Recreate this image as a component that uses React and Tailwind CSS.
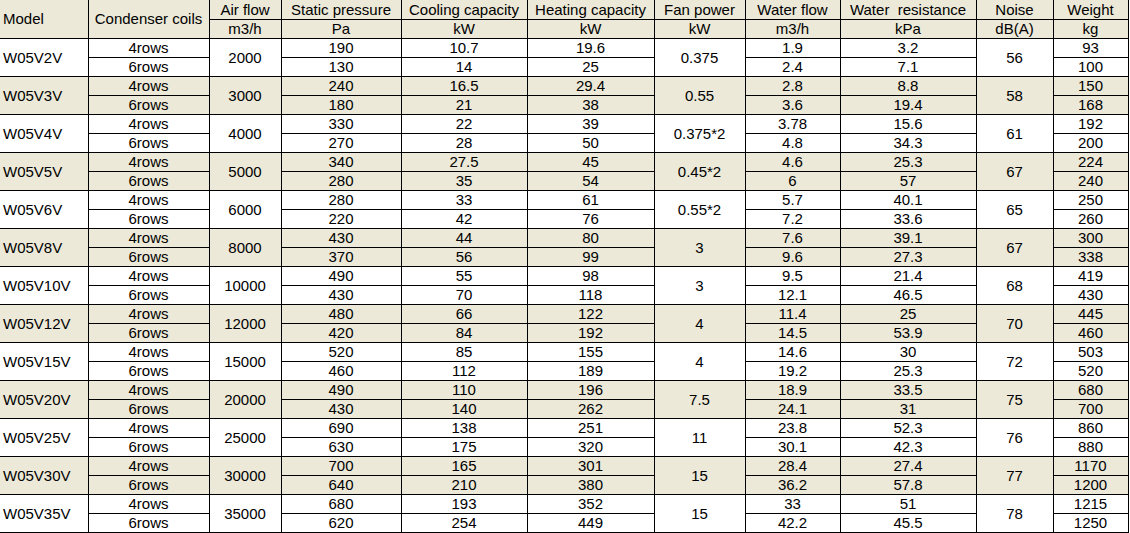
const rows = [
  ["W05V2V", "2000", ["190", "130"], ["10.7", "14"], ["19.6", "25"], "0.375", ["1.9", "2.4"], ["3.2", "7.1"], "56", ["93", "100"]],
  ["W05V3V", "3000", ["240", "180"], ["16.5", "21"], ["29.4", "38"], "0.55", ["2.8", "3.6"], ["8.8", "19.4"], "58", ["150", "168"]],
  ["W05V4V", "4000", ["330", "270"], ["22", "28"], ["39", "50"], "0.375*2", ["3.78", "4.8"], ["15.6", "34.3"], "61", ["192", "200"]],
  ["W05V5V", "5000", ["340", "280"], ["27.5", "35"], ["45", "54"], "0.45*2", ["4.6", "6"], ["25.3", "57"], "67", ["224", "240"]],
  ["W05V6V", "6000", ["280", "220"], ["33", "42"], ["61", "76"], "0.55*2", ["5.7", "7.2"], ["40.1", "33.6"], "65", ["250", "260"]],
  ["W05V8V", "8000", ["430", "370"], ["44", "56"], ["80", "99"], "3", ["7.6", "9.6"], ["39.1", "27.3"], "67", ["300", "338"]],
  ["W05V10V", "10000", ["490", "430"], ["55", "70"], ["98", "118"], "3", ["9.5", "12.1"], ["21.4", "46.5"], "68", ["419", "430"]],
  ["W05V12V", "12000", ["480", "420"], ["66", "84"], ["122", "192"], "4", ["11.4", "14.5"], ["25", "53.9"], "70", ["445", "460"]],
  ["W05V15V", "15000", ["520", "460"], ["85", "112"], ["155", "189"], "4", ["14.6", "19.2"], ["30", "25.3"], "72", ["503", "520"]],
  ["W05V20V", "20000", ["490", "430"], ["110", "140"], ["196", "262"], "7.5", ["18.9", "24.1"], ["33.5", "31"], "75", ["680", "700"]],
  ["W05V25V", "25000", ["690", "630"], ["138", "175"], ["251", "320"], "11", ["23.8", "30.1"], ["52.3", "42.3"], "76", ["860", "880"]],
  ["W05V30V", "30000", ["700", "640"], ["165", "210"], ["301", "380"], "15", ["28.4", "36.2"], ["27.4", "57.8"], "77", ["1170", "1200"]],
  ["W05V35V", "35000", ["680", "620"], ["193", "254"], ["352", "449"], "15", ["33", "42.2"], ["51", "45.5"], "78", ["1215", "1250"]],
];

const widths = [88, 121, 72, 120, 126, 127, 91, 95, 136, 77, 75];

const cell = "border-r border-b border-black p-0 text-center align-middle";

export default function App() {
  return (
    <div className="w-[1130px] h-[533px] bg-white overflow-hidden" style={{ fontFamily: '"Liberation Sans", Arial, sans-serif' }}>
      <table className="table-fixed border-collapse w-[1128px] text-[15px] leading-none text-black">
        <colgroup>
          {widths.map((w, i) => (
            <col key={i} style={{ width: w }} />
          ))}
        </colgroup>
        <thead className="bg-[#ece9d8]">
          <tr className="h-[19px]">
            <th rowSpan={2} className="border-r border-b border-black p-0 pl-[3px] text-left font-normal align-middle">Model</th>
            <th rowSpan={2} className={cell + " font-normal"}>Condenser coils</th>
            <th className={cell + " font-normal"}>Air flow</th>
            <th className={cell + " font-normal"}>Static pressure</th>
            <th className={cell + " font-normal"}>Cooling capacity</th>
            <th className={cell + " font-normal"}>Heating capacity</th>
            <th className={cell + " font-normal"}>Fan power</th>
            <th className={cell + " font-normal"}>Water flow</th>
            <th className={cell + " font-normal whitespace-pre"}>Water  resistance</th>
            <th className={cell + " font-normal"}>Noise</th>
            <th className={cell + " font-normal"}>Weight</th>
          </tr>
          <tr className="h-[19px]">
            <th className={cell + " font-normal"}>m3/h</th>
            <th className={cell + " font-normal"}>Pa</th>
            <th className={cell + " font-normal"}>kW</th>
            <th className={cell + " font-normal"}>kW</th>
            <th className={cell + " font-normal"}>kW</th>
            <th className={cell + " font-normal"}>m3/h</th>
            <th className={cell + " font-normal"}>kPa</th>
            <th className={cell + " font-normal"}>dB(A)</th>
            <th className={cell + " font-normal"}>kg</th>
          </tr>
        </thead>
        <tbody>
          {rows.map((r, i) => {
            const [model, air, sp, cool, heat, fan, wf, wr, noise, wt] = r;
            const bg = i % 2 === 1 ? "bg-[#ece9d8]" : "bg-white";
            return [0, 1].map((k) => (
              <tr key={model + k} className={"h-[19px] " + bg}>
                {k === 0 && (
                  <td rowSpan={2} className="border-r border-b border-black p-0 pl-[3px] text-left align-middle">{model}</td>
                )}
                <td className={cell}>{k === 0 ? "4rows" : "6rows"}</td>
                {k === 0 && <td rowSpan={2} className={cell}>{air}</td>}
                <td className={cell}>{sp[k]}</td>
                <td className={cell}>{cool[k]}</td>
                <td className={cell}>{heat[k]}</td>
                {k === 0 && <td rowSpan={2} className={cell}>{fan}</td>}
                <td className={cell}>{wf[k]}</td>
                <td className={cell}>{wr[k]}</td>
                {k === 0 && <td rowSpan={2} className={cell}>{noise}</td>}
                <td className={cell}>{wt[k]}</td>
              </tr>
            ));
          })}
        </tbody>
      </table>
    </div>
  );
}
